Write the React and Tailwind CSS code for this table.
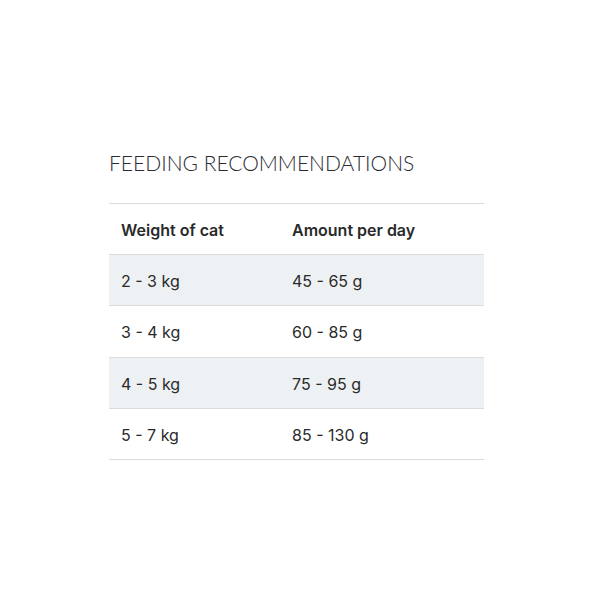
export default function App() {
  const rows = [
    ["2 - 3 kg", "45 - 65 g"],
    ["3 - 4 kg", "60 - 85 g"],
    ["4 - 5 kg", "75 - 95 g"],
    ["5 - 7 kg", "85 - 130 g"],
  ];
  return (
    <div className="w-[600px] h-[600px] bg-white flex flex-col pt-[150px] pl-[109px]">
      <h2 className="text-[21px] font-light text-[#2b2b33] leading-[26px]" style={{ fontFamily: "Lato, 'Open Sans', sans-serif" }}>FEEDING RECOMMENDATIONS</h2>
      <div className="mt-[27px] w-[375px] border-t border-[#dcdcdc] text-[#2a2a2a]" style={{ fontFamily: "Inter, 'Open Sans', sans-serif" }}>
        <div className="flex h-[51px] items-center pt-[1px] border-b border-[#dcdcdc] text-[16px] font-semibold">
          <div className="w-[183px] pl-[12px]">Weight of cat</div>
          <div>Amount per day</div>
        </div>
        {rows.map((r, i) => (
          <div key={i} className={`flex ${i === 1 ? "h-[52px]" : "h-[51px]"} items-center pt-[1px] border-b border-[#dcdcdc] text-[16px] ${i % 2 === 0 ? "bg-[#eef1f3]" : "bg-white"}`}>
            <div className="w-[183px] pl-[12px]">{r[0]}</div>
            <div>{r[1]}</div>
          </div>
        ))}
      </div>
    </div>
  );
}
